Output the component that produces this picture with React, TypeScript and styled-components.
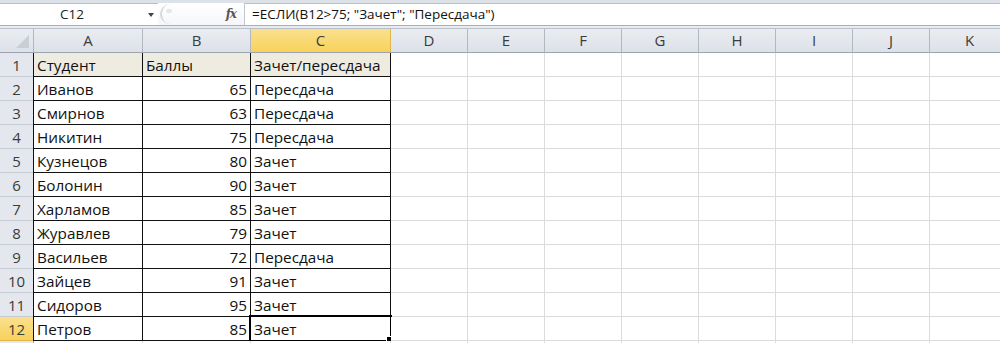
import React from "react";
import styled, { createGlobalStyle, css } from "styled-components";

const Global = createGlobalStyle`
  html, body { margin: 0; padding: 0; background: #ffffff; overflow: hidden; }
  * { box-sizing: border-box; }
`;

const FONT = `"Open Sans", "Noto Sans", "Liberation Sans", sans-serif`;

const Page = styled.div`
  width: 1000px;
  height: 343px;
  overflow: hidden;
  font-family: ${FONT};
  background: #fff;
  display: flex;
  flex-direction: column;
`;

const FormulaBar = styled.div`
  height: 26px;
  flex-shrink: 0;
  border-top: 3px solid #dde2e9;
  border-bottom: 1px solid #a9b0ba;
  display: flex;
  align-items: stretch;
  background: #fff;
  box-shadow: inset 0 1px 0 #b9c0c9;
`;

const NameBox = styled.div`
  width: 158px;
  display: flex;
  align-items: center;
  position: relative;
  font-size: 13.5px;
  color: #222;
  padding-left: 60px;
`;

const DropArrow = styled.span`
  position: absolute;
  right: 4px;
  top: 10px;
  width: 0;
  height: 0;
  border-left: 3.5px solid transparent;
  border-right: 3.5px solid transparent;
  border-top: 4px solid #444;
`;

const FxArea = styled.div`
  width: 87px;
  display: flex;
  align-items: center;
  justify-content: space-between;
  padding: 0 8px 0 2px;
  border-right: 1px solid #c2c8d0;
  background: linear-gradient(#ffffff, #f4f6f9);
`;

const Grip = styled.span`
  width: 16px;
  height: 20px;
  border-left: 2px solid #d3d8df;
  border-radius: 12px 0 0 12px;
  position: relative;
  &::after {
    content: "";
    position: absolute;
    left: 4px;
    top: 5px;
    width: 6px;
    height: 4px;
    border-radius: 3px;
    background: #e3e6ea;
  }
`;

const Fx = styled.span`
  font-family: "DejaVu Serif", "Liberation Serif", serif;
  font-style: italic;
  font-weight: bold;
  font-size: 12px;
  color: #555;
  letter-spacing: -1px;
`;

const FormulaText = styled.div`
  flex: 1;
  display: flex;
  align-items: center;
  padding-left: 7px;
  font-size: 13.5px;
  color: #111;
`;

const Gap = styled.div`
  height: 3px;
  flex-shrink: 0;
  background: #e8ecf1;
  border-bottom: 1px solid #b9c0c9;
`;

const COLS = [34, 109, 108, 140, 77, 77, 77, 77, 77, 77, 77, 80];

const Grid = styled.div`
  display: grid;
  grid-template-columns: ${COLS.map((c) => c + "px").join(" ")};
  grid-auto-rows: 24px;
  flex-shrink: 0;
`;

const HeadCell = styled.div<{ $sel?: boolean; $corner?: boolean }>`
  display: flex;
  align-items: center;
  justify-content: center;
  font-size: 15px;
  color: #3b3b3b;
  padding-bottom: 1px;
  background: ${(p) =>
    p.$sel ? "linear-gradient(#fbe08e, #f8d25a)" : "linear-gradient(#e9edf2, #dde2e8)"};
  border-right: 1px solid ${(p) => (p.$sel ? "#e2b54a" : "#b1b8c2")};
  border-bottom: 1px solid #9ba3ae;
  position: relative;
  ${(p) =>
    p.$corner &&
    css`
      &::after {
        content: "";
        position: absolute;
        right: 4px;
        bottom: 4px;
        width: 0;
        height: 0;
        border-left: 13px solid transparent;
        border-bottom: 13px solid #c9ced5;
      }
    `}
`;

const RowHead = styled.div<{ $sel?: boolean }>`
  display: flex;
  align-items: center;
  justify-content: center;
  font-size: 15px;
  color: #3b3b3b;
  background: ${(p) => (p.$sel ? "linear-gradient(#fbe08e, #f8d25a)" : "#e4e8ee")};
  border-right: 1px solid #9ba3ae;
  border-bottom: 1px solid ${(p) => (p.$sel ? "#e2b54a" : "#c5cbd3")};
`;

const Cell = styled.div<{
  $num?: boolean;
  $data?: boolean;
  $head?: boolean;
  $first?: boolean;
}>`
  display: flex;
  align-items: center;
  justify-content: ${(p) => (p.$num ? "flex-end" : "flex-start")};
  padding: 0 3px 0 3px;
  font-size: 15.3px;
  color: #111;
  white-space: nowrap;
  position: relative;
  background: ${(p) => (p.$head ? "#eeece1" : "#fff")};
  border-right: 1px solid ${(p) => (p.$data ? "#111" : "#dadcdd")};
  border-bottom: 1px solid ${(p) => (p.$data ? "#111" : "#dadcdd")};
  ${(p) =>
    p.$first &&
    css`
      border-left: 1px solid #111;
      margin-left: -1px;
    `}
`;

const Selection = styled.div`
  position: absolute;
  left: -2px;
  top: -2px;
  right: -2px;
  bottom: -2px;
  border: 2px solid #000;
  pointer-events: none;
  &::after {
    content: "";
    position: absolute;
    right: -4px;
    bottom: -4px;
    width: 6px;
    height: 6px;
    background: #000;
    border: 1px solid #fff;
  }
`;

const rows: [string, number | string, string][] = [
  ["Студент", "Баллы", "Зачет/пересдача"],
  ["Иванов", 65, "Пересдача"],
  ["Смирнов", 63, "Пересдача"],
  ["Никитин", 75, "Пересдача"],
  ["Кузнецов", 80, "Зачет"],
  ["Болонин", 90, "Зачет"],
  ["Харламов", 85, "Зачет"],
  ["Журавлев", 79, "Зачет"],
  ["Васильев", 72, "Пересдача"],
  ["Зайцев", 91, "Зачет"],
  ["Сидоров", 95, "Зачет"],
  ["Петров", 85, "Зачет"],
];

const LETTERS = ["A", "B", "C", "D", "E", "F", "G", "H", "I", "J", "K"];

export default function App() {
  return (
    <Page>
      <Global />
      <FormulaBar>
        <NameBox>
          C12
          <DropArrow />
        </NameBox>
        <FxArea>
          <Grip />
          <Fx>fx</Fx>
        </FxArea>
        <FormulaText>=ЕСЛИ(B12&gt;75; "Зачет"; "Пересдача")</FormulaText>
      </FormulaBar>
      <Gap />
      <Grid>
        <HeadCell $corner />
        {LETTERS.map((l) => (
          <HeadCell key={l} $sel={l === "C"}>
            {l}
          </HeadCell>
        ))}
        {rows.map((r, i) => {
          const n = i + 1;
          return (
            <React.Fragment key={n}>
              <RowHead $sel={n === 12}>{n}</RowHead>
              <Cell $data $head={n === 1} $first>
                {r[0]}
              </Cell>
              <Cell $data $head={n === 1} $num={typeof r[1] === "number"}>
                {r[1]}
              </Cell>
              <Cell $data $head={n === 1}>
                {r[2]}
                {n === 12 && <Selection />}
              </Cell>
              {LETTERS.slice(3).map((l) => (
                <Cell key={l} />
              ))}
            </React.Fragment>
          );
        })}
        <RowHead />
        {LETTERS.map((l) => (
          <Cell key={l} />
        ))}
      </Grid>
    </Page>
  );
}
